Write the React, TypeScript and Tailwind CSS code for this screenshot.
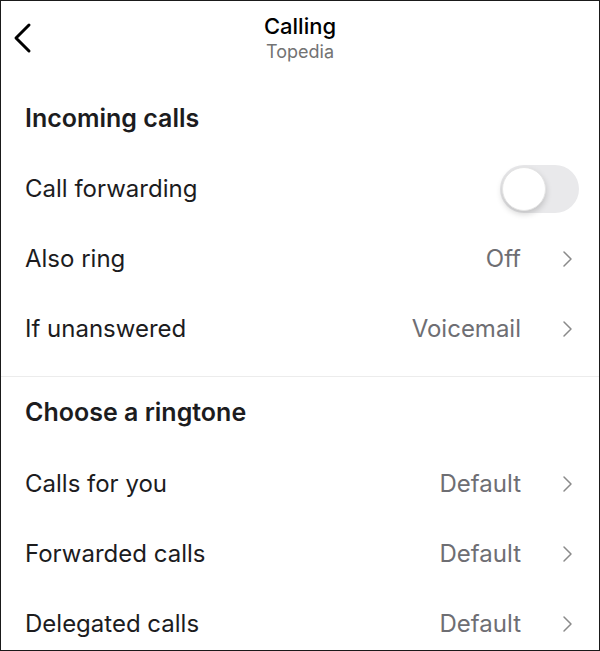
import React from "react";

const font = { fontFamily: "Inter, 'Noto Sans', sans-serif" };

function Chevron() {
  return (
    <svg width="12" height="18" viewBox="0 0 12 18" className="ml-[40px] mr-[26px]">
      <polyline points="3,2 10,9 3,16" fill="none" stroke="#8a8a8a" strokeWidth="1.5" strokeLinecap="round" strokeLinejoin="round" />
    </svg>
  );
}

function Row({ label, value }: { label: string; value: string }) {
  return (
    <div className="h-[70px] flex flex-row items-center pl-6">
      <span className="flex-grow text-[24px] text-[#1c1c1e]">{label}</span>
      <span className="text-[24px] text-[#6e6e73]">{value}</span>
      <Chevron />
    </div>
  );
}

function Toggle() {
  return (
    <div className="w-[79px] h-[48px] rounded-full bg-[#e9e9eb] p-[2px] flex flex-row items-center">
      <div className="w-[44px] h-[44px] rounded-full bg-white shadow-[0_3px_6px_rgba(0,0,0,0.18)] border border-[#e5e5e5]" />
    </div>
  );
}

export default function App() {
  return (
    <div className="w-[600px] h-[651px] bg-white border border-[#1a1a1a] overflow-hidden" style={font}>
      <header className="relative h-[82px] flex flex-col items-center pt-[11px]">
        <svg width="24" height="34" viewBox="0 0 24 34" className="absolute left-[10px] top-[20px]">
          <polyline points="18,4 5,17 18,30" fill="none" stroke="#000" strokeWidth="3" strokeLinecap="round" strokeLinejoin="round" />
        </svg>
        <span className="text-[22px] leading-[29px] font-medium text-black">Calling</span>
        <span className="text-[18px] leading-[21px] text-[#737373]">Topedia</span>
      </header>

      <section>
        <div className="h-[71px] flex flex-row items-center pl-6">
          <span className="text-[25px] font-semibold text-[#1c1c1e]">Incoming calls</span>
        </div>
        <div className="h-[70px] flex flex-row items-center pl-6 pr-5">
          <span className="flex-grow text-[24px] text-[#1c1c1e]">Call forwarding</span>
          <Toggle />
        </div>
        <Row label="Also ring" value="Off" />
        <Row label="If unanswered" value="Voicemail" />
      </section>

      <div className="h-[12px]" />
      <div className="h-px bg-[#ececec]" />

      <section>
        <div className="h-[72px] flex flex-row items-center pl-6">
          <span className="text-[25px] font-semibold text-[#1c1c1e]">Choose a ringtone</span>
        </div>
        <Row label="Calls for you" value="Default" />
        <Row label="Forwarded calls" value="Default" />
        <Row label="Delegated calls" value="Default" />
      </section>
    </div>
  );
}
